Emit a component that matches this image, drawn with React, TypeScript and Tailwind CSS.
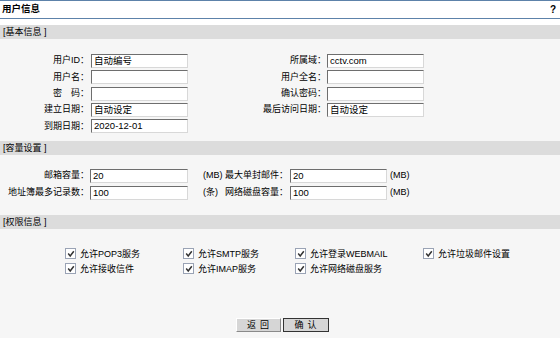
import React from "react";

const font = { fontFamily: '"Liberation Sans", "Noto Sans CJK SC", sans-serif' };

function Input({ value, w = "w-[97px]" }: { value?: string; w?: string }) {
  return (
    <div
      className={`${w} h-[14px] shrink-0 bg-white border border-t-[#6e6e6e] border-l-[#6e6e6e] border-r-[#d8d8d8] border-b-[#d8d8d8] text-[9.5px] leading-[12px] pl-[2px] text-black overflow-hidden whitespace-nowrap`}
    >
      {value}
    </div>
  );
}

function Bar({ title }: { title: string }) {
  return (
    <div className="h-[14px] bg-[#dcdcdc] text-[9px] leading-[14px] pl-[3px] text-black">
      [{title} ]
    </div>
  );
}

function Check({ label, w }: { label: string; w: string }) {
  return (
    <div className={`flex items-center ${w} h-[15px]`}>
      <div className="w-[11px] h-[11px] bg-white border border-[#9aa3b5] flex items-center justify-center">
        <svg width="8" height="8" viewBox="0 0 8 8">
          <path d="M1.2 3.6 L3.2 6 L6.8 1.2" stroke="#333" strokeWidth="1.5" fill="none" />
        </svg>
      </div>
      <span className="ml-[4px] text-[9px] leading-[12px] text-black whitespace-nowrap">{label}</span>
    </div>
  );
}

function Label({ text, w }: { text: string; w: string }) {
  return <div className={`${w} shrink-0 flex justify-end whitespace-nowrap`}>{text}</div>;
}

export default function App() {
  const basic: [string, string | undefined, string | null, string | undefined][] = [
    ["用户ID：", "自动编号", "所属域：", "cctv.com"],
    ["用户名：", "", "用户全名：", ""],
    ["密　码：", "", "确认密码：", ""],
    ["建立日期：", "自动设定", "最后访问日期：", "自动设定"],
    ["到期日期：", "2020-12-01", null, undefined],
  ];
  return (
    <div className="w-[560px] h-[338px] bg-white text-[9px] text-black overflow-hidden" style={font}>
      <div className="h-[19px] border-t border-b border-[#5d82aa] flex items-center justify-between px-[2px]">
        <span className="font-bold text-[9.5px] text-black">用户信息</span>
        <span className="font-bold text-[10px] mr-[2px]">?</span>
      </div>
      <div className="h-[6px]" />
      <Bar title="基本信息" />
      <div className="bg-[#f6f6f6] pt-[14px] pb-[7px]">
        {basic.map(([l1, v1, l2, v2], i) => (
          <div key={i} className="flex items-center h-[16.3px]">
            <Label text={l1} w="w-[89px]" />
            <div className="w-[2px]" />
            <Input value={v1} />
            {l2 !== null && (
              <>
                <Label text={l2} w="w-[138px]" />
                <div className="w-[1px]" />
                <Input value={v2} />
              </>
            )}
          </div>
        ))}
      </div>
      <Bar title="容量设置" />
      <div className="bg-[#f6f6f6] pt-[12px] pb-[14px]">
        {[
          ["邮箱容量：", "20", "(MB)", "最大单封邮件：", "20"],
          ["地址簿最多记录数：", "100", "(条)", "网络磁盘容量：", "100"],
        ].map(([l1, v1, u1, l2, v2], i) => (
          <div key={i} className="flex items-center h-[17px]">
            <Label text={l1} w="w-[89px]" />
            <div className="w-[1px]" />
            <Input value={v1} w="w-[98px]" />
            <div className="w-[39px] shrink-0 pl-[15px] text-[9px]">{u1}</div>
            <Label text={l2} w="w-[61px]" />
            <div className="w-[2px]" />
            <Input value={v2} w="w-[97px]" />
            <div className="pl-[3px] text-[9px]">(MB)</div>
          </div>
        ))}
      </div>
      <Bar title="权限信息" />
      <div className="bg-[#f6f6f6] h-[109px] pt-[17px] flex flex-col">
        <div className="flex pl-[65px]">
          <Check label="允许POP3服务" w="w-[118px]" />
          <Check label="允许SMTP服务" w="w-[112px]" />
          <Check label="允许登录WEBMAIL" w="w-[128px]" />
          <Check label="允许垃圾邮件设置" w="w-[120px]" />
        </div>
        <div className="flex pl-[65px]">
          <Check label="允许接收信件" w="w-[118px]" />
          <Check label="允许IMAP服务" w="w-[112px]" />
          <Check label="允许网络磁盘服务" w="w-[128px]" />
        </div>
        <div className="flex justify-center gap-[2px] mt-[42px] pl-[4px]">
          <div className="w-[45px] h-[14px] bg-[#d6d6d6] border border-t-white border-l-white border-r-[#8a8a8a] border-b-[#8a8a8a] text-[9px] leading-[12px] text-center tracking-[4px] pl-[4px]">
            返回
          </div>
          <div className="w-[46px] h-[14px] bg-[#d6d6d6] border border-[#333] text-[9px] leading-[12px] text-center tracking-[4px] pl-[4px]">
            确认
          </div>
        </div>
      </div>
    </div>
  );
}
